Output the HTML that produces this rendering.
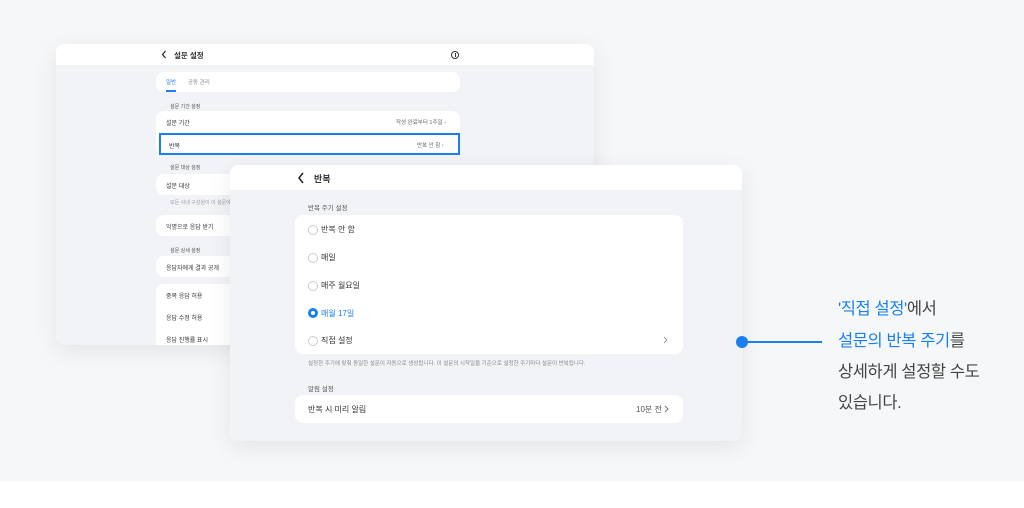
<!DOCTYPE html>
<html><head><meta charset="utf-8"><style>
*{margin:0;padding:0;box-sizing:border-box}
body{width:1024px;height:508px;background:#fff;font-family:"Liberation Sans","Noto Sans CJK KR",sans-serif;position:relative;overflow:hidden;color:#222}
.bg{position:absolute;left:0;top:0;width:1024px;height:481px;background:#f6f7f9}
.p{position:absolute;background:#f2f3f7;border-radius:8px;overflow:hidden;box-shadow:0 6px 24px rgba(0,0,0,.08)}
.hd{position:absolute;left:0;top:0;right:0;background:#fff}
.a{position:absolute;font-size:6px;color:#333;white-space:nowrap}
.card{position:absolute;background:#fff;border-radius:8px}
.lbl{position:absolute;font-size:5px;color:#555;white-space:nowrap}
.r{position:absolute;width:10px;height:10px;border:1px solid #ccc;border-radius:50%;background:#fff}
.f{position:absolute;font-size:8px;color:#333;white-space:nowrap}
.fl{position:absolute;font-size:6.5px;color:#555;white-space:nowrap}
.t{position:absolute;left:838px;font-size:16.5px;color:#444;white-space:nowrap;letter-spacing:-0.4px}
.b{color:#1a7ff0}
svg{position:absolute}
</style></head><body>
<div class="bg"></div>

<div class="p" style="left:56px;top:44px;width:538px;height:301px">
 <div class="hd" style="height:21px">
  <svg style="left:105px;top:6px" width="6" height="9" viewBox="0 0 6 9"><path d="M4.5 1L1.5 4.5L4.5 8" fill="none" stroke="#222" stroke-width="1.2"/></svg>
  <div class="a" style="left:118px;top:6px;font-size:7.5px;font-weight:bold">설문 설정</div>
  <div style="position:absolute;left:395px;top:7px;width:8px;height:8px;border:1px solid #333;border-radius:50%"></div>
  <div style="position:absolute;left:398.5px;top:9px;width:1px;height:4px;background:#333"></div>
 </div>
 <div class="card" style="left:100px;top:28px;width:304px;height:20px">
  <div class="a" style="left:10px;top:6px;color:#1a7ff0;font-size:5.5px">일반</div>
  <div style="position:absolute;left:10px;top:18px;width:10px;height:1.5px;background:#1a7ff0"></div>
  <div class="a" style="left:32px;top:6px;color:#888;font-size:5.5px">공동 관리</div>
 </div>
 <div class="lbl" style="left:114px;top:59px">설문 기간 설정</div>
 <div class="card" style="left:100px;top:67px;width:304px;height:44px">
  <div class="a" style="left:10px;top:7px">설문 기간</div>
  <div class="a" style="left:240px;top:7px;color:#666;font-size:5.5px">작성 완료부터 1주일 ›</div>
 </div>
 <div style="position:absolute;left:103px;top:89px;width:301px;height:22px;border:2px solid #1a7ff0;background:#fff">
  <div class="a" style="left:8px;top:6px">반복</div>
  <div class="a" style="left:256px;top:6px;color:#666;font-size:5.5px">반복 안 함 ›</div>
 </div>
 <div class="lbl" style="left:114px;top:120px">설문 대상 설정</div>
 <div class="card" style="left:100px;top:130px;width:304px;height:21px"><div class="a" style="left:10px;top:7px">설문 대상</div></div>
 <div class="lbl" style="left:114px;top:155px;color:#999">모든 사내 구성원이 이 설문에</div>
 <div class="card" style="left:100px;top:171px;width:304px;height:21px"><div class="a" style="left:10px;top:7px">익명으로 응답 받기</div></div>
 <div class="lbl" style="left:114px;top:203px">설문 상세 설정</div>
 <div class="card" style="left:100px;top:212px;width:304px;height:21px"><div class="a" style="left:10px;top:7px">응답자에게 결과 공개</div></div>
 <div class="card" style="left:100px;top:240px;width:304px;height:70px">
  <div class="a" style="left:10px;top:7px">중복 응답 허용</div>
  <div class="a" style="left:10px;top:29px">응답 수정 허용</div>
  <div class="a" style="left:10px;top:51px">응답 진행률 표시</div>
 </div>
</div>

<div class="p" style="left:230px;top:165px;width:512px;height:276px">
 <div class="hd" style="height:25px">
  <svg style="left:67px;top:7px" width="8" height="12" viewBox="0 0 8 12"><path d="M6 1L2 6L6 11" fill="none" stroke="#222" stroke-width="1.5"/></svg>
  <div class="f" style="left:84px;top:7px;font-size:9px;font-weight:bold">반복</div>
 </div>
 <div class="fl" style="left:78px;top:37px">반복 주기 설정</div>
 <div class="card" style="left:65px;top:50px;width:388px;height:139px">
  <div class="r" style="left:13px;top:10px"></div><div class="f" style="left:26px;top:9px">반복 안 함</div>
  <div class="r" style="left:13px;top:38px"></div><div class="f" style="left:26px;top:37px">매일</div>
  <div class="r" style="left:13px;top:66px"></div><div class="f" style="left:26px;top:65px">매주 월요일</div>
  <div class="r" style="left:13px;top:93px;border:3px solid #1a7ff0"></div><div class="f" style="left:26px;top:93px;color:#1a7ff0">매월 17일</div>
  <div class="r" style="left:13px;top:121px"></div><div class="f" style="left:26px;top:120px">직접 설정</div>
  <svg style="left:368px;top:121px" width="5" height="8" viewBox="0 0 5 8"><path d="M1 1L4 4L1 7" fill="none" stroke="#999" stroke-width="1"/></svg>
 </div>
 <div class="fl" style="left:78px;top:194px;font-size:5.5px;color:#888">설정한 주기에 맞춰 동일한 설문이 자동으로 생성됩니다. 이 설문의 시작일을 기준으로 설정한 주기마다 설문이 반복됩니다.</div>
 <div class="fl" style="left:78px;top:218px">알림 설정</div>
 <div class="card" style="left:65px;top:230px;width:388px;height:28px">
  <div class="f" style="left:13px;top:9px">반복 시 미리 알림</div>
  <div class="f" style="left:341px;top:9px;color:#555">10분 전</div>
  <svg style="left:369px;top:10px" width="5" height="8" viewBox="0 0 5 8"><path d="M1 1L4 4L1 7" fill="none" stroke="#777" stroke-width="1"/></svg>
 </div>
</div>

<div style="position:absolute;left:736px;top:336px;width:12px;height:12px;border-radius:50%;background:#1a7ff0"></div>
<div style="position:absolute;left:742px;top:341px;width:80px;height:2px;background:#1a7ff0"></div>
<div class="t" style="top:295px"><span class="b">'직접 설정'</span>에서</div>
<div class="t" style="top:327px"><span class="b">설문의 반복 주기</span>를</div>
<div class="t" style="top:358px">상세하게 설정할 수도</div>
<div class="t" style="top:389px">있습니다.</div>
</body></html>
